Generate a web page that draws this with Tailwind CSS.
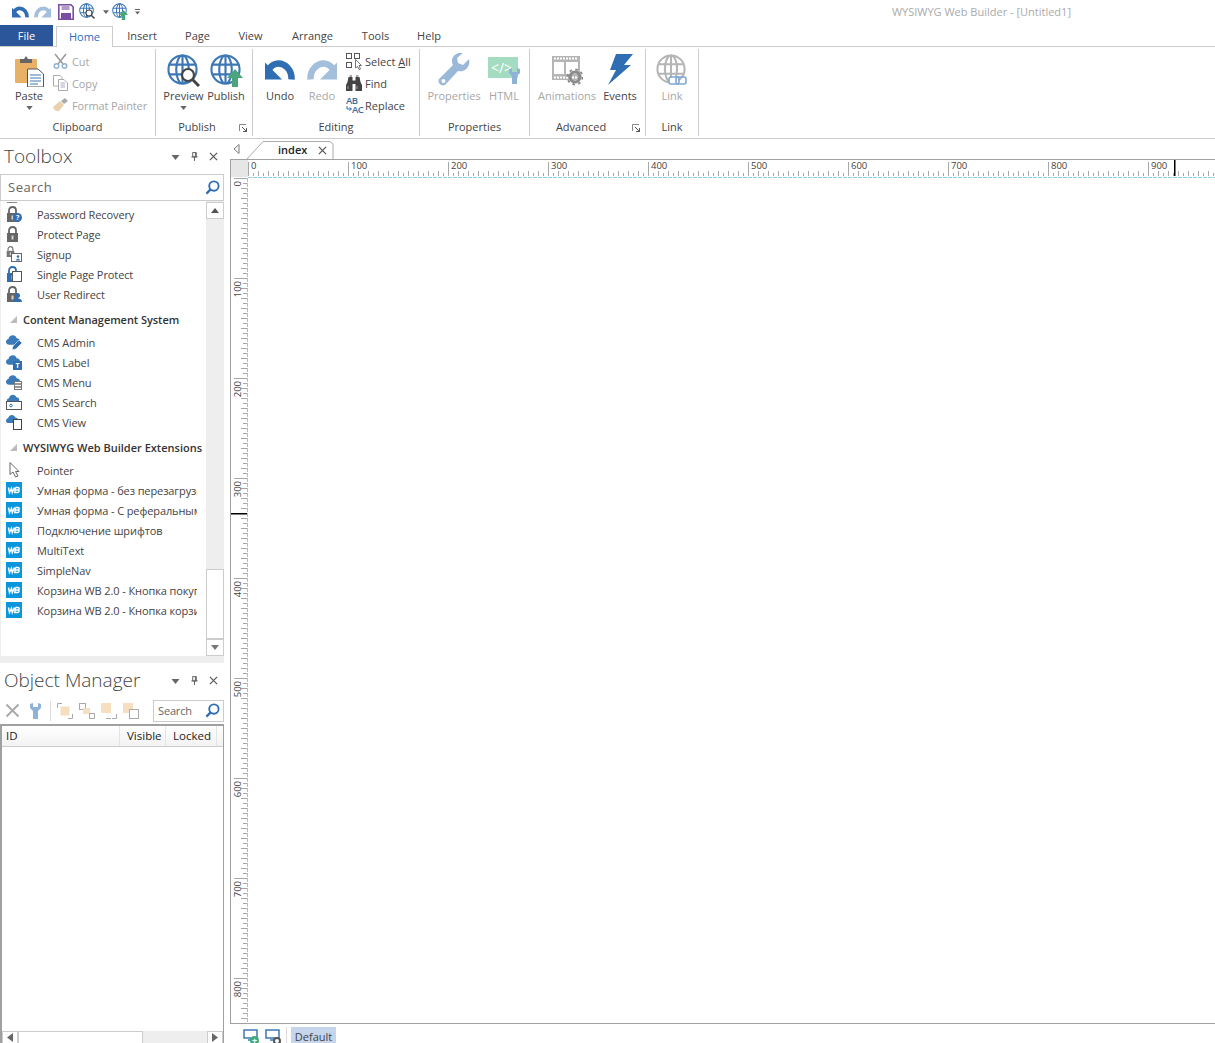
<!DOCTYPE html>
<html><head><meta charset="utf-8"><script src="https://cdn.jsdelivr.net/npm/@tailwindcss/browser@4"></script></head>
<body class="bg-white">
<svg class="absolute w-0 h-0" aria-hidden="true"><defs>
<symbol id="undo" viewBox="0 0 30 20"><path d="M26.5 19.5C27 10 20 3.500 13.500 3.500C9.500 3.500 6.500 5.500 4 9" fill="none" stroke="currentColor" stroke-width="6.500"/><path d="M0 2.500V19.500H17Z" fill="currentColor"/></symbol>
<symbol id="globe" viewBox="0 0 32 32"><g fill="none" stroke="currentColor" stroke-width="2.200"><circle cx="16" cy="16" r="14.500"/><ellipse cx="16" cy="16" rx="6.500" ry="14.500"/><path d="M16 1.500V30.500M2 11H30M2 21H30"/></g></symbol>
<symbol id="mag" viewBox="0 0 20 20"><circle cx="8" cy="8" r="6" fill="#fff" stroke="#444" stroke-width="2.200"/><path d="M12.500 12.500L19 19" stroke="#444" stroke-width="3"/></symbol>
<symbol id="garrow" viewBox="0 0 16 18"><path d="M8 0L16 9H11V18H5V9H0Z" fill="#4aa57d"/></symbol>
<symbol id="search" viewBox="0 0 16 16"><circle cx="9.500" cy="6.500" r="5" fill="none" stroke="#2f6eb2" stroke-width="2"/><path d="M6 10L1.500 14.500" stroke="#2f6eb2" stroke-width="2.400"/></symbol>
<symbol id="lock" viewBox="0 0 16 16"><path d="M3 7V4.500C3 2.500 4.500 1 6.500 1S10 2.500 10 4.500V7" fill="none" stroke="currentColor" stroke-width="1.800"/><rect x="1" y="7" width="11" height="9" fill="currentColor"/><rect x="5.500" y="9.500" width="2" height="4" fill="#fff" opacity=".7"/></symbol>
<symbol id="cloud" viewBox="0 0 16 12"><path d="M3.500 11C1.500 11 0 9.700 0 8S1.200 5.200 2.600 5C3 2.600 5 1 7.200 1C9.300 1 10.800 2.300 11.400 4C13.600 4 15 5.500 15 7.500S13.600 11 11.500 11Z" fill="#3a7ab8"/></symbol>
<symbol id="wb" viewBox="0 0 16 16"><rect width="16" height="16" fill="#0a96dc"/><path d="M2.500 5.500L3.500 10.500L5.500 6.500L6.300 10.500L8.500 5.500M9.500 5.500L8.800 10.500H11.500C13.300 10.500 13.800 8 11.800 8H9.500M11.800 8C13.500 8 13.800 5.500 12 5.500H9.500" fill="none" stroke="#fff" stroke-width="1.500"/></symbol>
<symbol id="wrench" viewBox="0 0 32 34"><path d="M31 6L25 12L20 10L19 5L25 0C20-1 14 2 14 8C14 10 14.500 11 15 12L1 26C-1 29 3 34 7 32L20 18C27 20 33 13 31 6Z" fill="currentColor"/><circle cx="5.500" cy="28" r="2" fill="#fff"/></symbol>
<symbol id="tri" viewBox="0 0 8 5"><path d="M0 0H8L4 5Z" fill="currentColor"/></symbol>
<symbol id="launch" viewBox="0 0 8 8"><path d="M.5 7V.5H7" fill="none" stroke="#888"/><path d="M3 3L7.500 7.500M7.500 4V7.500H4" fill="none" stroke="#555"/></symbol>
<symbol id="x" viewBox="0 0 10 10"><path d="M1 1L9 9M9 1L1 9" stroke="currentColor" stroke-width="1.300" fill="none"/></symbol>
<symbol id="pin" viewBox="0 0 10 10"><path d="M3 .5H7V5.500H3ZM1.500 5.500H8.500M5 5.500V10M6 1V5" stroke="#555" fill="none"/></symbol>
<pattern id="hticks" width="10" height="18" patternUnits="userSpaceOnUse"><rect x="0" y="11" width="1" height="5" fill="#a8a8a8"/><rect x="5" y="13" width="1" height="3" fill="#a8a8a8"/></pattern>
<pattern id="vticks" width="17" height="10" patternUnits="userSpaceOnUse"><rect x="10" y="0" width="6" height="1" fill="#a8a8a8"/><rect x="12" y="5" width="4" height="1" fill="#a8a8a8"/></pattern>
<pattern id="hdash" width="5" height="1" patternUnits="userSpaceOnUse"><rect width="4" height="1" fill="#8fcbe0"/></pattern>
<pattern id="vdash" width="1" height="5" patternUnits="userSpaceOnUse"><rect width="1" height="4" fill="#8fcbe0"/></pattern>
</defs></svg>
<div class="w-[1215px] h-[1043px] overflow-hidden flex flex-col bg-white text-[#444] text-[11px] leading-none font-['Open_Sans',sans-serif]">

<!-- quick access -->
<div class="h-[25px] flex items-center pb-[2px] relative shrink-0">
  <svg class="w-[17px] h-[12px] ml-[12px] text-[#2f6eb2]"><use href="#undo"/></svg>
  <svg class="w-[17px] h-[12px] ml-[5px] text-[#a3bfdc] -scale-x-100"><use href="#undo"/></svg>
  <svg class="w-[16px] h-[16px] ml-[7px]" viewBox="0 0 16 16"><path d="M.8.8H13L15.200 3V15.200H.8Z" fill="#fff" stroke="#7a4ea0" stroke-width="1.600"/><rect x="3.500" y="1" width="8" height="5" fill="#b49ac8"/><rect x="3" y="9" width="10" height="6" fill="#7a4ea0"/></svg>
  <span class="relative w-[17px] h-[17px] ml-[5px] text-[#3d78b5]"><svg class="w-[15px] h-[15px]"><use href="#globe"/></svg><svg class="absolute left-[6px] top-[6px] w-[10px] h-[10px]"><use href="#mag"/></svg></span>
  <svg class="w-[6px] h-[4px] ml-[7px] text-[#666]"><use href="#tri"/></svg>
  <span class="relative w-[17px] h-[17px] ml-[3px] text-[#3d78b5]"><svg class="w-[15px] h-[15px]"><use href="#globe"/></svg><svg class="absolute left-[7px] top-[7px] w-[9px] h-[10px]"><use href="#garrow"/></svg></span>
  <span class="ml-[6px] flex flex-col items-center gap-[1px]"><span class="w-[5px] h-px bg-[#666]"></span><svg class="w-[5px] h-[4px] text-[#666]"><use href="#tri"/></svg></span>
  <span class="ml-auto mr-[144px] text-[#aaa] text-[11px]">WYSIWYG Web Builder - [Untitled1]</span>
</div>

<!-- tabs -->
<div class="h-[21px] flex items-end shrink-0 text-[11px] text-[#444] relative">
  <div class="w-[53px] h-[21px] bg-[#2b579a] text-white flex items-center justify-center">File</div>
  <div class="w-[57px] h-[21px] ml-[3px] pb-[1px] border border-b-0 border-[#ccc] bg-white text-[#2b6cc4] flex items-center justify-center relative top-px z-10">Home</div>
  <div class="w-[58px] h-[21px] flex items-center justify-center">Insert</div>
  <div class="w-[53px] h-[21px] flex items-center justify-center">Page</div>
  <div class="w-[53px] h-[21px] flex items-center justify-center">View</div>
  <div class="w-[71px] h-[21px] flex items-center justify-center">Arrange</div>
  <div class="w-[55px] h-[21px] flex items-center justify-center">Tools</div>
  <div class="w-[52px] h-[21px] flex items-center justify-center">Help</div>
</div>

<!-- ribbon -->
<div class="h-[93px] border-y border-[#ccc] flex py-[2px] shrink-0">
  <!-- Clipboard -->
  <div class="w-[156px] border-r border-[#ccc] flex flex-col relative">
    <div class="h-[70px] flex pl-[6px]">
      <div class="w-[46px] flex flex-col items-center pt-[4px]">
        <svg class="w-[30px] h-[34px]" viewBox="0 0 30 34"><rect x="1" y="6" width="22" height="24" rx="1" fill="#e8b165"/><path d="M6 6H10L12 3L14 6H18V10H6Z" fill="#666"/><path d="M13.500 16H24L29.500 21V34H13.500Z" fill="#fff" stroke="#555"/><path d="M16 22H27M16 25H27M16 28H27M16 31H24" stroke="#3d78b5"/></svg>
        <span class="h-[18px] pb-[2px] flex items-center">Paste</span>
        <svg class="w-[7px] h-[4px] text-[#666] mt-[1px]"><use href="#tri"/></svg>
      </div>
      <div class="flex flex-col text-[#a6a6a6] ml-[1px] pt-[1px] tracking-[-.12px]">
        <div class="h-[22px] flex items-center gap-[4px]"><svg class="w-[15px] h-[16px]" viewBox="0 0 15 16"><path d="M2 1L10 11M13 1L5 11" stroke="#999" stroke-width="1.500"/><circle cx="3.500" cy="13" r="2.300" fill="none" stroke="#8fb0d4" stroke-width="1.500"/><circle cx="11.500" cy="13" r="2.300" fill="none" stroke="#8fb0d4" stroke-width="1.500"/></svg>Cut</div>
        <div class="h-[22px] flex items-center gap-[4px]"><svg class="w-[15px] h-[16px]" viewBox="0 0 15 16"><path d="M.5.500H7L9 2.500V11H.5Z" fill="#fff" stroke="#aaa"/><path d="M5.500 4.500H11L14.500 8V15.500H5.500Z" fill="#fff" stroke="#aaa"/><path d="M7.500 8H12M7.500 10H12M7.500 12H12" stroke="#aac"/></svg>Copy</div>
        <div class="h-[22px] flex items-center gap-[4px]"><svg class="w-[15px] h-[14px]" viewBox="0 0 15 14"><path d="M0 9L7 3L11 7L6 13C3 14 1 12 0 9Z" fill="#e8d3ae"/><path d="M8 3L12 0L15 3L11 6Z" fill="#aaa"/></svg>Format Painter</div>
      </div>
    </div>
    <div class="flex-1 flex items-center justify-center pb-[2px]">Clipboard</div>
  </div>
  <!-- Publish -->
  <div class="w-[97px] border-r border-[#ccc] flex flex-col relative">
    <div class="h-[70px] flex pl-[6px]">
      <div class="w-[43px] flex flex-col items-center pt-[4px]">
        <span class="relative w-[33px] h-[34px] pt-[1px] text-[#3d78b5]"><svg class="w-[31px] h-[31px]"><use href="#globe"/></svg><svg class="absolute left-[13px] top-[14px] w-[20px] h-[20px]"><use href="#mag"/></svg></span>
        <span class="h-[18px] pb-[2px] flex items-center">Preview</span>
        <svg class="w-[7px] h-[4px] text-[#666] mt-[1px]"><use href="#tri"/></svg>
      </div>
      <div class="w-[42px] flex flex-col items-center pt-[4px]">
        <span class="relative w-[33px] h-[34px] pt-[1px] text-[#3d78b5]"><svg class="w-[31px] h-[31px]"><use href="#globe"/></svg><svg class="absolute left-[17px] top-[16px] w-[16px] h-[18px]"><use href="#garrow"/></svg></span>
        <span class="h-[18px] pb-[2px] flex items-center">Publish</span>
      </div>
    </div>
    <div class="flex-1 flex items-center justify-center pb-[2px] pr-[14px]">Publish</div>
    <svg class="absolute right-[5px] bottom-[4px] w-[8px] h-[8px]"><use href="#launch"/></svg>
  </div>
  <!-- Editing -->
  <div class="w-[167px] border-r border-[#ccc] flex flex-col">
    <div class="h-[70px] flex">
      <div class="w-[54px] flex flex-col items-center pt-[4px]">
        <div class="h-[34px] flex items-center"><svg class="w-[30px] h-[20px] text-[#2f6eb2]"><use href="#undo"/></svg></div>
        <span class="h-[18px] pb-[2px] flex items-center">Undo</span>
      </div>
      <div class="w-[30px] flex flex-col items-center pt-[4px] text-[#a6a6a6]">
        <div class="h-[34px] flex items-center"><svg class="w-[30px] h-[20px] text-[#a3bfdc] -scale-x-100"><use href="#undo"/></svg></div>
        <span class="h-[18px] pb-[2px] flex items-center">Redo</span>
      </div>
      <div class="flex flex-col ml-[9px] pt-[1px]">
        <div class="h-[22px] flex items-center gap-[3px]"><svg class="w-[16px] h-[17px]" viewBox="0 0 16 17"><g fill="none" stroke="#555"><rect x=".5" y=".5" width="5" height="5"/><rect x="8.500" y=".5" width="5" height="5"/><rect x=".5" y="9.500" width="5" height="5"/></g><path d="M9.500 6.500V15L11.500 13.500L13 16.500L14.500 16L13 12.500H15.500Z" fill="#fff" stroke="#555" stroke-width=".8"/></svg><span>Select <span class="underline">A</span>ll</span></div>
        <div class="h-[22px] flex items-center gap-[3px]"><svg class="w-[16px] h-[16px]" viewBox="0 0 16 16"><path d="M2.500 2H6.500V5.500H9.500V2H13.500L14.500 7L16 10V16H9.500V9H6.500V16H0V10L1.500 7Z" fill="#444"/><path d="M3.500 1H6M10 1H12.500" stroke="#555"/><path d="M2 11V14M11 11V14" stroke="#999"/></svg>Find</div>
        <div class="h-[22px] flex items-center gap-[3px]"><span class="relative w-[16px] h-[17px] text-[9.5px] leading-[8px] font-semibold text-[#3d6a9c]"><span class="block tracking-[-.5px]">AB</span><span class="block mt-[1px] pl-[6px] tracking-[-.5px]">AC</span><svg class="absolute left-0 top-[9px] w-[6px] h-[6px]" viewBox="0 0 6 6"><path d="M1 0V3H5M3.500 1.500L5.500 3L3.500 4.500" fill="none" stroke="#2f6eb2"/></svg></span>Replace</div>
      </div>
    </div>
    <div class="flex-1 flex items-center justify-center pb-[2px]">Editing</div>
  </div>
  <!-- Properties -->
  <div class="w-[110px] border-r border-[#ccc] flex flex-col">
    <div class="h-[70px] flex text-[#a6a6a6]">
      <div class="w-[68px] flex flex-col items-center pt-[4px]">
        <svg class="w-[32px] h-[34px] text-[#9ab8d8]"><use href="#wrench"/></svg>
        <span class="h-[18px] pb-[2px] flex items-center">Properties</span>
      </div>
      <div class="w-[32px] flex flex-col items-center pt-[4px]">
        <span class="relative w-[32px] h-[34px] text-[#9ab8d8]">
          <span class="absolute left-0 top-[4px] w-[30px] h-[21px] bg-[#a3dcc0] text-white text-[14px] flex items-center justify-center pr-[3px]">&lt;/&gt;</span>
          <svg class="absolute left-[21px] top-[15px] w-[11px] h-[16px]" viewBox="0 0 11 16"><path d="M0 1V5L3 8V16H8V8L11 5V1L8 0V4H3V0Z" fill="#8eb2d8"/></svg>
        </span>
        <span class="h-[18px] pb-[2px] flex items-center">HTML</span>
      </div>
    </div>
    <div class="flex-1 flex items-center justify-center pb-[2px]">Properties</div>
  </div>
  <!-- Advanced -->
  <div class="w-[116px] border-r border-[#ccc] flex flex-col relative">
    <div class="h-[70px] flex pl-[4px]">
      <div class="w-[66px] flex flex-col items-center pt-[4px] text-[#a6a6a6]">
        <svg class="w-[32px] h-[34px]" viewBox="0 0 32 34"><rect x="1" y="3" width="28" height="24" fill="#b5b5b5"/><rect x="3" y="9" width="24" height="12" fill="#fff"/><path d="M3 5.500H27M3 24.500H27" stroke="#fff" stroke-width="2" stroke-dasharray="2 1"/><path d="M14 9V21" stroke="#b5b5b5" stroke-width="2"/><circle cx="24" cy="24" r="5" fill="none" stroke="#8a8a8a" stroke-width="3"/><circle cx="24" cy="24" r="7.500" fill="none" stroke="#8a8a8a" stroke-width="2" stroke-dasharray="2.500 3.400"/></svg>
        <span class="h-[18px] pb-[2px] flex items-center">Animations</span>
      </div>
      <div class="w-[40px] flex flex-col items-center pt-[4px]">
        <svg class="w-[26px] h-[34px]" viewBox="0 0 26 34"><path d="M9 1H26L17 12H24L1 32L9 17H3Z" fill="#2f6eb2"/></svg>
        <span class="h-[18px] pb-[2px] flex items-center">Events</span>
      </div>
    </div>
    <div class="flex-1 flex items-center justify-center pb-[2px] pr-[13px]">Advanced</div>
    <svg class="absolute right-[5px] bottom-[4px] w-[8px] h-[8px]"><use href="#launch"/></svg>
  </div>
  <!-- Link -->
  <div class="w-[53px] border-r border-[#ccc] flex flex-col">
    <div class="h-[70px] flex flex-col items-center pt-[4px] text-[#a6a6a6]">
      <span class="relative w-[32px] h-[34px] pt-[1px] text-[#b5b5b5]"><svg class="w-[30px] h-[30px]"><use href="#globe"/></svg><svg class="absolute left-[12px] top-[23px] w-[19px] h-[9px]" viewBox="0 0 19 9"><rect x="1" y="1" width="10" height="7" rx="2" fill="#fff" stroke="#7fa8d4" stroke-width="1.600"/><rect x="8" y="1" width="10" height="7" rx="2" fill="none" stroke="#7fa8d4" stroke-width="1.600"/></svg></span>
      <span class="h-[18px] pb-[2px] flex items-center">Link</span>
    </div>
    <div class="flex-1 flex items-center justify-center pb-[2px]">Link</div>
  </div>
</div>

<!-- main -->
<div class="flex-1 flex min-h-0">
  <!-- left -->
  <div class="w-[224px] flex flex-col shrink-0">
    <div class="h-[35px] flex items-center pl-[4px] text-[19px] font-light text-[#444] shrink-0">
      <span class="flex-1">Toolbox</span>
      <svg class="w-[9px] h-[5px] text-[#666] mr-[10px] mt-[2px]"><use href="#tri"/></svg>
      <svg class="w-[9px] h-[9px] mr-[10px]"><use href="#pin"/></svg>
      <svg class="w-[9px] h-[9px] mr-[6px] text-[#555]"><use href="#x"/></svg>
    </div>
    <div class="h-[27px] border border-[#ccc] flex items-center pl-[7px] pr-[3px] text-[13px] tracking-[.5px] text-[#666] shrink-0">
      <span class="flex-1">Search</span><svg class="w-[15px] h-[15px]"><use href="#search"/></svg>
    </div>
    <div class="h-[455px] flex shrink-0 border-l border-[#eee]">
      <div class="w-[205px] overflow-hidden pt-[1px] tracking-[-.1px]">
        <div class="h-px w-[10px] ml-[6px] mb-[1px] bg-[#888]"></div>
        <div class="whitespace-nowrap">
          <div class="h-5 flex items-center pl-[5px]"><span class="relative w-[16px] h-[16px] mr-[15px] text-[#666]"><svg class="w-[16px] h-[16px]"><use href="#lock"/></svg><span class="absolute right-0 bottom-0 w-[9px] h-[9px] rounded-full bg-[#2f6eb2] text-white text-[7px] font-bold flex items-center justify-center">?</span></span>Password Recovery</div>
          <div class="h-5 flex items-center pl-[5px]"><svg class="w-[16px] h-[16px] mr-[15px] text-[#666]"><use href="#lock"/></svg>Protect Page</div>
          <div class="h-5 flex items-center pl-[5px]"><span class="relative w-[16px] h-[16px] mr-[15px] text-[#777]"><svg class="w-[11px] h-[11px]"><use href="#lock"/></svg><svg class="absolute right-0 bottom-0 w-[11px] h-[9px]" viewBox="0 0 11 9"><rect x=".5" y=".5" width="10" height="8" fill="#fff" stroke="#666"/><circle cx="7" cy="3.500" r="1.300" fill="#2f6eb2"/><path d="M5 7.500C5 5 9 5 9 7.500Z" fill="#2f6eb2"/></svg></span>Signup</div>
          <div class="h-5 flex items-center pl-[5px]"><span class="relative w-[16px] h-[16px] mr-[15px] text-[#2f6eb2]"><svg class="w-[16px] h-[16px]"><use href="#lock"/></svg><span class="absolute right-0 bottom-0 w-[10px] h-[11px] bg-white border border-[#555]"></span></span>Single Page Protect</div>
          <div class="h-5 flex items-center pl-[5px]"><span class="relative w-[16px] h-[16px] mr-[15px] text-[#666]"><svg class="w-[16px] h-[16px]"><use href="#lock"/></svg><svg class="absolute right-0 bottom-0 w-[9px] h-[9px]" viewBox="0 0 9 9"><circle cx="4.500" cy="2.500" r="2.500" fill="#2f6eb2"/><path d="M0 9C0 4 9 4 9 9Z" fill="#2f6eb2"/></svg></span>User Redirect</div>

          <div class="h-7 flex items-center pl-[8px] pt-[2px] font-semibold text-[#333] tracking-[-.05px]"><svg class="w-[8px] h-[8px] mr-[6px] shrink-0" viewBox="0 0 8 8"><path d="M8 1V8H1Z" fill="#bbb"/></svg>Content Management System</div>

          <div class="h-5 flex items-center pl-[5px]"><span class="relative w-[16px] h-[16px] mr-[15px]"><svg class="w-[15px] h-[12px]"><use href="#cloud"/></svg><svg class="absolute right-0 bottom-0 w-[10px] h-[10px]" viewBox="0 0 10 10"><path d="M0 10L1 6L7 0L10 3L4 9Z" fill="#2f6eb2" stroke="#fff" stroke-width=".6"/></svg></span>CMS Admin</div>
          <div class="h-5 flex items-center pl-[5px]"><span class="relative w-[16px] h-[16px] mr-[15px]"><svg class="w-[15px] h-[12px]"><use href="#cloud"/></svg><span class="absolute right-0 bottom-0 w-[9px] h-[9px] bg-[#2f6eb2] text-white text-[7px] font-bold flex items-center justify-center">T</span></span>CMS Label</div>
          <div class="h-5 flex items-center pl-[5px]"><span class="relative w-[16px] h-[16px] mr-[15px]"><svg class="w-[15px] h-[12px]"><use href="#cloud"/></svg><svg class="absolute right-0 bottom-0 w-[8px] h-[9px]" viewBox="0 0 8 9"><rect x=".5" y=".5" width="7" height="8" fill="#fff" stroke="#777"/><path d="M1 3H7M1 6H7" stroke="#777" stroke-width="1.500"/></svg></span>CMS Menu</div>
          <div class="h-5 flex items-center pl-[5px]"><span class="relative w-[16px] h-[16px] mr-[15px]"><svg class="w-[15px] h-[10px]"><use href="#cloud"/></svg><svg class="absolute left-0 bottom-0 w-[16px] h-[9px]" viewBox="0 0 16 9"><rect x=".5" y=".5" width="15" height="8" fill="#fff" stroke="#555"/><circle cx="5" cy="4.500" r="1.300" fill="none" stroke="#2f6eb2"/></svg></span>CMS Search</div>
          <div class="h-5 flex items-center pl-[5px]"><span class="relative w-[16px] h-[16px] mr-[15px]"><svg class="w-[13px] h-[10px]"><use href="#cloud"/></svg><span class="absolute right-0 bottom-0 w-[9px] h-[11px] bg-white border border-[#444]"></span></span>CMS View</div>

          <div class="h-7 flex items-center pl-[8px] pt-[2px] font-semibold text-[#333] tracking-normal"><svg class="w-[8px] h-[8px] mr-[6px] shrink-0" viewBox="0 0 8 8"><path d="M8 1V8H1Z" fill="#bbb"/></svg>WYSIWYG Web Builder Extensions</div>

          <div class="h-5 flex items-center pl-[5px]"><svg class="w-[16px] h-[16px] mr-[15px]" viewBox="0 0 16 16"><path d="M4 .5V12.500L7 10L9.500 15L12 14L9.500 9.500H13Z" fill="#fff" stroke="#666"/></svg>Pointer</div>
          <div class="h-5 w-[196px] overflow-hidden flex items-center pl-[5px]"><svg class="w-[16px] h-[16px] mr-[15px] shrink-0"><use href="#wb"/></svg>Умная форма - без перезагрузки</div>
          <div class="h-5 w-[196px] overflow-hidden flex items-center pl-[5px]"><svg class="w-[16px] h-[16px] mr-[15px] shrink-0"><use href="#wb"/></svg>Умная форма - С реферальным</div>
          <div class="h-5 w-[196px] overflow-hidden flex items-center pl-[5px]"><svg class="w-[16px] h-[16px] mr-[15px] shrink-0"><use href="#wb"/></svg>Подключение шрифтов</div>
          <div class="h-5 w-[196px] overflow-hidden flex items-center pl-[5px]"><svg class="w-[16px] h-[16px] mr-[15px] shrink-0"><use href="#wb"/></svg>MultiText</div>
          <div class="h-5 w-[196px] overflow-hidden flex items-center pl-[5px]"><svg class="w-[16px] h-[16px] mr-[15px] shrink-0"><use href="#wb"/></svg>SimpleNav</div>
          <div class="h-5 w-[196px] overflow-hidden flex items-center pl-[5px]"><svg class="w-[16px] h-[16px] mr-[15px] shrink-0"><use href="#wb"/></svg>Корзина WB 2.0 - Кнопка покупки</div>
          <div class="h-5 w-[196px] overflow-hidden flex items-center pl-[5px]"><svg class="w-[16px] h-[16px] mr-[15px] shrink-0"><use href="#wb"/></svg>Корзина WB 2.0 - Кнопка корзины</div>
        </div>
      </div>
      <div class="w-[18px] bg-[#eee] flex flex-col">
        <div class="h-[17px] bg-white border border-[#ccc] flex items-center justify-center mt-[1px]"><svg class="w-[8px] h-[5px] text-[#555] rotate-180"><use href="#tri"/></svg></div>
        <div class="flex-1"></div>
        <div class="h-[70px] bg-white border border-[#ccc]"></div>
        <div class="h-[17px] bg-white border border-[#ccc] flex items-center justify-center"><svg class="w-[8px] h-[5px] text-[#777]"><use href="#tri"/></svg></div>
      </div>
    </div>
    <div class="h-[7px] bg-[#eee] shrink-0"></div>
    <div class="h-[36px] flex items-center pl-[4px] pb-[2px] text-[19px] font-light shrink-0">
      <span class="flex-1">Object Manager</span>
      <svg class="w-[9px] h-[5px] text-[#666] mr-[10px] mt-[2px]"><use href="#tri"/></svg>
      <svg class="w-[9px] h-[9px] mr-[10px]"><use href="#pin"/></svg>
      <svg class="w-[9px] h-[9px] mr-[6px] text-[#555]"><use href="#x"/></svg>
    </div>
    <div class="h-[25px] flex items-center pl-[5px] pb-[2px] shrink-0">
      <svg class="w-[15px] h-[15px] text-[#aaa]"><use href="#x"/></svg>
      <svg class="w-[11px] h-[16px] ml-[10px]" viewBox="0 0 11 16"><path d="M0 1V5L3 8V16H8V8L11 5V1L8 0V4H3V0Z" fill="#8eb2d8"/></svg>
      <span class="w-px h-[20px] bg-[#ddd] ml-[9px]"></span>
      <svg class="w-[16px] h-[16px] ml-[6px]" viewBox="0 0 16 16"><rect x="3.500" y="3.500" width="9" height="9" fill="#f5dfc0"/><path d="M.5 5V.5H5M11 15.500H15.500V11" stroke="#aaa" fill="none"/></svg>
      <svg class="w-[16px] h-[16px] ml-[6px]" viewBox="0 0 16 16"><rect x=".5" y=".5" width="6" height="6" fill="#fff" stroke="#aaa"/><rect x="4" y="5" width="7" height="6" fill="#f5dfc0"/><rect x="10.500" y="10.500" width="5" height="5" fill="#fff" stroke="#aaa"/></svg>
      <svg class="w-[16px] h-[16px] ml-[6px]" viewBox="0 0 16 16"><rect x="0" y="0" width="10" height="10" fill="#f5dfc0"/><path d="M11 15.500H15.500V11M10 15.500H5" stroke="#aaa" fill="none"/></svg>
      <svg class="w-[16px] h-[16px] ml-[6px]" viewBox="0 0 16 16"><rect x="0" y="0" width="10" height="10" fill="#f5dfc0"/><rect x="6.500" y="6.500" width="9" height="9" fill="#fff" stroke="#aaa"/></svg>
      <div class="ml-auto w-[71px] h-[22px] border border-[#ccc] flex items-center pl-[4px] pr-[3px] text-[#666] tracking-[-.15px]"><span class="flex-1">Search</span><svg class="w-[15px] h-[15px]"><use href="#search"/></svg></div>
    </div>
    <div class="flex-1 border-x-2 border-t-2 border-[#a0a0a0] border-r-[1px] flex flex-col min-h-0">
      <div class="h-[21px] flex border-b border-[#ccc] bg-gradient-to-b from-white to-[#f2f2f2] text-[11.5px] text-[#222] shrink-0">
        <div class="w-[118px] pl-[4px] flex items-center border-r border-[#e4e4e4]">ID</div>
        <div class="w-[46px] pl-[7px] flex items-center border-r border-[#e4e4e4]">Visible</div>
        <div class="w-[51px] pl-[7px] flex items-center border-r border-[#e4e4e4]">Locked</div>
      </div>
      <div class="flex-1"></div>
      <div class="h-[12px] flex bg-[#eee] shrink-0">
        <div class="w-[16px] bg-white border border-[#ccc] border-b-0 flex items-center justify-center"><svg class="w-[6px] h-[9px] text-[#666]" viewBox="0 0 6 9"><path d="M6 0V9L0 4.500Z" fill="currentColor"/></svg></div>
        <div class="w-[125px] bg-white border-x border-t border-[#ccc]"></div>
        <div class="flex-1"></div>
        <div class="w-[16px] bg-white border border-[#ccc] border-b-0 flex items-center justify-center"><svg class="w-[6px] h-[9px] text-[#666]" viewBox="0 0 6 9"><path d="M0 0V9L6 4.500Z" fill="currentColor"/></svg></div>
      </div>
    </div>
  </div>

  <!-- right -->
  <div class="flex-1 ml-[6px] flex flex-col min-w-0">
    <div class="h-[20px] flex items-end shrink-0 relative">
      <svg class="w-[7px] h-[10px] ml-[3px] mb-[5px]" viewBox="0 0 7 10"><path d="M6 .5V9.500L1 5Z" fill="none" stroke="#777"/></svg>
      <div class="relative w-[87px] h-[18px] ml-[7px] pb-[1px] flex items-center text-[11px] font-semibold text-[#222] pl-[31px]">
        <svg class="absolute inset-0 w-[87px] h-[18px]" viewBox="0 0 87 18"><path d="M0 18L16 .5H83L86 3V18" fill="#fff" stroke="#aaa"/></svg>
        <span class="relative">index</span>
        <svg class="absolute left-[71px] top-[5px] w-[9px] h-[9px] text-[#555]"><use href="#x"/></svg>
      </div>
    </div>
    <div class="flex-1 border-y border-l border-[#a0a0a0] flex flex-col min-h-0">
      <div class="h-[18px] flex shrink-0">
        <div class="w-[17px] h-[17px] bg-[#e6e6e6] shrink-0"></div>
        <svg class="w-[967px] h-[18px] shrink-0" viewBox="0 0 967 18">
          <rect width="967" height="18" fill="url(#hticks)"/><rect y="17" width="967" height="1" fill="url(#hdash)"/>
          <path d="M0.500 2V16M100.500 2V16M200.500 2V16M300.500 2V16M400.500 2V16M500.500 2V16M600.500 2V16M700.500 2V16M800.500 2V16M900.500 2V16" stroke="#a8a8a8"/>
          <rect x="926" y="0" width="1.500" height="16" fill="#000"/>
          <g font-family="'Open Sans',sans-serif" font-size="9.500" fill="#444">
            <text x="3" y="9">0</text><text x="103" y="9">100</text><text x="203" y="9">200</text><text x="303" y="9">300</text><text x="403" y="9">400</text><text x="503" y="9">500</text><text x="603" y="9">600</text><text x="703" y="9">700</text><text x="803" y="9">800</text><text x="903" y="9">900</text>
          </g>
        </svg>
      </div>
      <div class="flex-1 flex min-h-0">
        <svg class="w-[17px] h-[845px] shrink-0" viewBox="0 0 17 845">
          <rect width="17" height="845" fill="url(#vticks)"/><rect x="16" width="1" height="845" fill="url(#vdash)"/>
          <path d="M3 0.500H16M3 100.500H16M3 200.500H16M3 300.500H16M3 400.500H16M3 500.500H16M3 600.500H16M3 700.500H16M3 800.500H16" stroke="#a8a8a8"/>
          <rect x="0" y="335" width="16" height="1.500" fill="#000"/>
          <g font-family="'Open Sans',sans-serif" font-size="9.500" fill="#444" text-anchor="end">
            <text transform="translate(9.500 3) rotate(-90)">0</text><text transform="translate(9.500 103) rotate(-90)">100</text><text transform="translate(9.500 203) rotate(-90)">200</text><text transform="translate(9.500 303) rotate(-90)">300</text><text transform="translate(9.500 403) rotate(-90)">400</text><text transform="translate(9.500 503) rotate(-90)">500</text><text transform="translate(9.500 603) rotate(-90)">600</text><text transform="translate(9.500 703) rotate(-90)">700</text><text transform="translate(9.500 803) rotate(-90)">800</text>
          </g>
        </svg>
        <div class="flex-1 bg-white"></div>
      </div>
    </div>
    <div class="h-[19px] flex items-end pl-[13px] shrink-0">
      <span class="relative w-[16px] h-[16px] mb-[-2px]"><svg class="w-[15px] h-[13px]" viewBox="0 0 15 13"><path d="M1 1H14V9H1ZM5 11H10" fill="none" stroke="#3d78b5" stroke-width="1.500"/></svg><span class="absolute right-0 bottom-0 w-[9px] h-[9px] rounded-full bg-[#3faa7c] text-white text-[9px] font-bold flex items-center justify-center">+</span></span>
      <span class="relative w-[16px] h-[16px] ml-[6px] mb-[-2px]"><svg class="w-[15px] h-[13px]" viewBox="0 0 15 13"><path d="M1 1H14V9H1ZM5 11H10" fill="none" stroke="#3d78b5" stroke-width="1.500"/></svg><span class="absolute right-0 bottom-0 w-[8px] h-[8px] rounded-full border-[2px] border-[#555] bg-white"></span></span>
      <span class="w-px h-[16px] bg-[#ddd] ml-[5px]"></span>
      <span class="ml-[4px] h-[16px] w-[45px] bg-[#c5d5ec] flex items-center justify-center text-[11px] pt-[2px]">Default</span>
    </div>
  </div>
</div>
</div>
</body></html>
